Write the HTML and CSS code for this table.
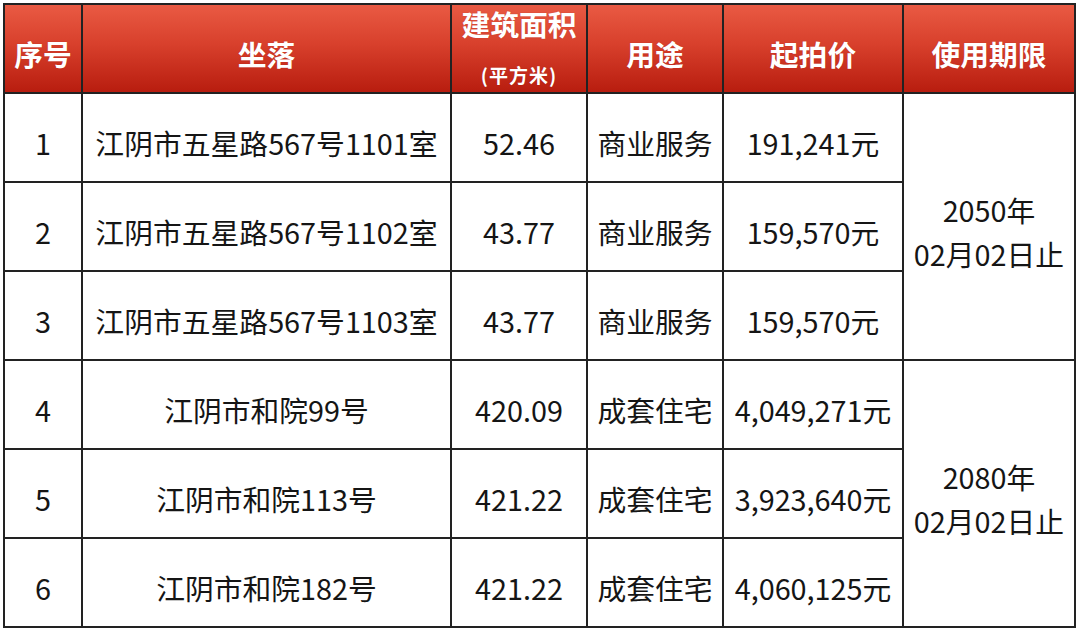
FILE: index.html
```html
<!DOCTYPE html>
<html lang="zh">
<head>
<meta charset="utf-8">
<link rel="stylesheet" href="styles.css">
</head>
<body>
<div class="wrap">
<table class="grid">
  <colgroup>
    <col class="c1"><col class="c2"><col class="c3"><col class="c4"><col class="c5"><col class="c6">
  </colgroup>
  <thead>
    <tr>
      <th>序号</th>
      <th>坐落</th>
      <th class="area"><span class="main">建筑面积</span><span class="unit">(平方米)</span></th>
      <th>用途</th>
      <th>起拍价</th>
      <th>使用期限</th>
    </tr>
  </thead>
  <tbody>
    <tr><td>1</td><td>江阴市五星路567号1101室</td><td>52.46</td><td>商业服务</td><td>191,241元</td><td rowspan="3" class="term">2050年<br>02月02日止</td></tr>
    <tr><td>2</td><td>江阴市五星路567号1102室</td><td>43.77</td><td>商业服务</td><td>159,570元</td></tr>
    <tr><td>3</td><td>江阴市五星路567号1103室</td><td>43.77</td><td>商业服务</td><td>159,570元</td></tr>
    <tr><td>4</td><td>江阴市和院99号</td><td>420.09</td><td>成套住宅</td><td>4,049,271元</td><td rowspan="3" class="term">2080年<br>02月02日止</td></tr>
    <tr><td>5</td><td>江阴市和院113号</td><td>421.22</td><td>成套住宅</td><td>3,923,640元</td></tr>
    <tr><td>6</td><td>江阴市和院182号</td><td>421.22</td><td>成套住宅</td><td>4,060,125元</td></tr>
  </tbody>
</table>
</div>
</body>
</html>
```
FILE: styles.css
```css
html, body {
  margin: 0;
  padding: 0;
  background: #ffffff;
}
.wrap {
  padding: 3px 0 0 3px;
}
.grid {
  border-collapse: collapse;
  width: 1073px;
  table-layout: fixed;
  font-family: "Noto Sans CJK SC", "Noto Sans", sans-serif;
  color: #151515;
}
.c1 { width: 78px; }
.c2 { width: 369px; }
.c3 { width: 136px; }
.c4 { width: 136px; }
.c5 { width: 180px; }
.c6 { width: 172px; }
.grid th, .grid td {
  border: 2px solid #222222;
  text-align: center;
  vertical-align: middle;
  padding: 10px 0 0 0;
  height: 77px;
  box-sizing: content-box;
  white-space: nowrap;
}
.grid th {
  background: linear-gradient(to bottom, #e95a43 0%, #d8402c 45%, #b81d0f 100%);
  color: #ffffff;
  font-size: 28.8px;
  font-weight: 700;
  line-height: 36px;
  text-shadow: 0 0 1px rgba(120, 0, 0, 0.4);
}
.grid td {
  font-size: 28.8px;
  font-weight: 400;
  line-height: 36px;
}
.area {
  padding-top: 0 !important;
}
.area .main {
  display: block;
  line-height: 34px;
  margin-top: -4px;
}
.area .unit {
  display: block;
  font-size: 19px;
  letter-spacing: 1px;
  line-height: 22px;
  margin-top: 23px;
}
.term {
  line-height: 44px !important;
}
```
